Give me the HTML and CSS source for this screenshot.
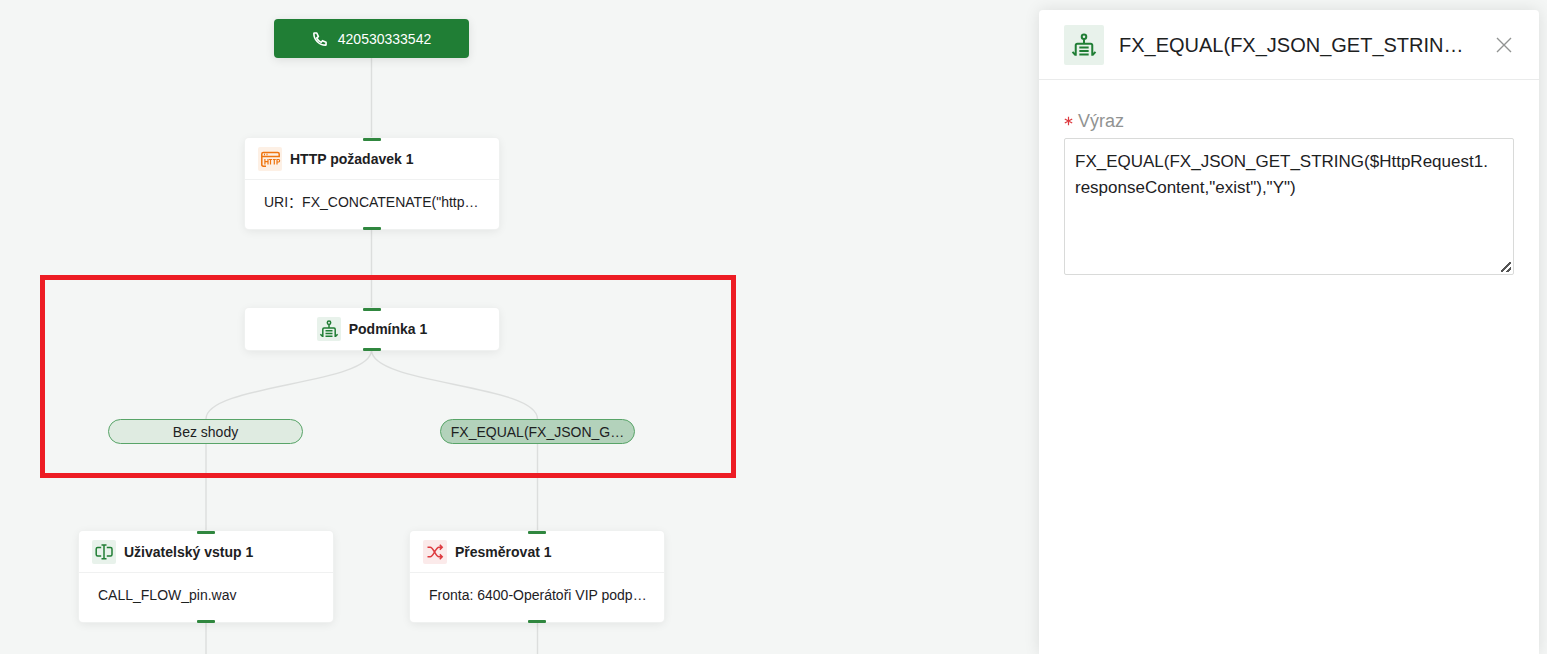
FILE: index.html
```
<!DOCTYPE html>
<html lang="cs">
<head>
<meta charset="utf-8">
<title>Call flow</title>
<link rel="stylesheet" href="styles.css">
</head>
<body>
<svg class="sprite" aria-hidden="true">
  <symbol id="condition" viewBox="0 0 24 24" fill="none" stroke="currentColor">
    <g stroke-width="1.5"><circle cx="12" cy="5.8" r="1.7"/><path d="M12 7.5V11M5.8 20V12.2Q5.8 11 7 11H17Q18.2 11 18.2 12.2V20M3.4 17.2L5.6 19.6M20.6 17.2L18.4 19.6"/><path d="M8.5 13.8H15.5M8.5 16.5H15.5M8.5 19.2H15.5"/></g>
  </symbol>
</svg>
<div class="app">
  <main class="canvas">
    <svg class="edges" fill="none" stroke="#dcdedd" stroke-width="1.4" aria-hidden="true">
      <path d="M371.5 58V138M371.5 229V308M371.5 350C371.5 385 206 384 206 419M371.5 350C371.5 385 537.5 384 537.5 419M206 443V531M537.5 443V531M206 622V2000M537.5 622V2000"/>
    </svg>
    <button class="phone" type="button">
      <svg width="16" height="16" viewBox="0 0 18 18" fill="none" stroke="currentColor" stroke-width="1.8" stroke-linejoin="round" aria-hidden="true"><path d="M2.6 2.2H5.4L7.2 6.3L5.3 7.7C6.3 9.9 7.9 11.7 10.3 12.8L11.8 10.9L15.8 12.6V15.4C15.8 15.7 15.5 15.9 15.2 15.9C8 15.9 2.1 10 2.1 2.8C2.1 2.5 2.3 2.2 2.6 2.2Z"/></svg>
      <span>420530333542</span>
    </button>
    <section class="node node-http">
      <header class="node-head">
        <span class="tile orange"><svg width="24" height="24" viewBox="0 0 24 24" fill="none" stroke="currentColor" stroke-width="1.5" aria-hidden="true"><path d="M8 19.2H5.3Q3.8 19.2 3.8 17.7V7Q3.8 5.5 5.3 5.5H19.7Q21.2 5.5 21.2 7V10.2M3.8 9.6H21.2M6 7.5H7M8.5 7.5H9.5"/><path stroke-width="1.2" d="M6.9 12V17.5M10 12V17.5M6.9 14.7H10M11 12.5H14M12.5 12.5V17.5M14.8 12.5H17.8M16.3 12.5V17.5M19 17.5V12.5H20.8Q21.6 12.5 21.6 13.7T20.8 15H19"/></svg></span>
        <h2>HTTP požadavek 1</h2>
      </header>
      <p class="node-body">URI：FX_CONCATENATE("http…</p>
    </section>
    <section class="node node-condition">
      <header class="node-head centered">
        <span class="tile green"><svg width="24" height="24" aria-hidden="true"><use href="#condition"/></svg></span>
        <h2>Podmínka 1</h2>
      </header>
    </section>
    <button class="branch branch-none" type="button">Bez shody</button>
    <button class="branch branch-match" type="button">FX_EQUAL(FX_JSON_G…</button>
    <section class="node node-input">
      <header class="node-head">
        <span class="tile green"><svg width="24" height="24" viewBox="0 0 24 24" fill="none" stroke="currentColor" stroke-width="1.5" aria-hidden="true"><path d="M9.2 7.6H5.7Q4.2 7.6 4.2 9.1V14.4Q4.2 15.9 5.7 15.9H9.2M14.8 7.6H18.5Q20 7.6 20 9.1V14.4Q20 15.9 18.5 15.9H14.8M12 5V18.8M9.5 5H14.5M9.5 18.8H14.5"/></svg></span>
        <h2>Uživatelský vstup 1</h2>
      </header>
      <p class="node-body">CALL_FLOW_pin.wav</p>
    </section>
    <section class="node node-redirect">
      <header class="node-head">
        <span class="tile red"><svg width="24" height="24" viewBox="0 0 24 24" fill="none" stroke="currentColor" stroke-width="1.5" aria-hidden="true"><path d="M4.5 7.2H7.2C10.5 7.2 12.5 16.8 16 16.8H19M4.5 16.8H7.2C10.5 16.8 12.5 7.2 16 7.2H19M16.8 4.8L19.2 7.2L16.8 9.6M16.8 14.4L19.2 16.8L16.8 19.2"/></svg></span>
        <h2>Přesměrovat 1</h2>
      </header>
      <p class="node-body">Fronta: 6400-Operátoři VIP podp…</p>
    </section>
    <div class="highlight"></div>
  </main>
  <aside class="panel">
    <header class="panel-head">
      <span class="tile large green"><svg width="32" height="32" aria-hidden="true"><use href="#condition"/></svg></span>
      <h1>FX_EQUAL(FX_JSON_GET_STRIN…</h1>
      <button class="close" type="button" aria-label="Zavřít"><svg width="16" height="16" viewBox="0 0 16 16" stroke="currentColor" stroke-width="1.4" aria-hidden="true"><path d="M1 1L15 15M15 1L1 15"/></svg></button>
    </header>
    <form class="panel-body">
      <label for="expression"><svg width="9" height="18" viewBox="0 0 9 18" stroke="#dd3a3f" stroke-width="1.2" aria-hidden="true"><path d="M4.5 4.8V13.2M.8 6.9L8.2 11.1M8.2 6.9L.8 11.1"/></svg>Výraz</label>
      <textarea id="expression" spellcheck="false" required>FX_EQUAL(FX_JSON_GET_STRING($HttpRequest1.responseContent,"exist"),"Y")</textarea>
    </form>
  </aside>
</div>
</body>
</html>
```
FILE: styles.css
```
* { box-sizing: border-box; }
body {
  margin: 0;
  background: #f4f6f5;
  color: #1d211f;
  font-family: "Liberation Sans", "Noto Sans CJK SC", sans-serif;
  font-size: 14px;
}
h1, h2, p { margin: 0; }
button { font: inherit; color: inherit; cursor: pointer; }
.sprite { display: none; }
.app { display: flex; height: 100vh; overflow: hidden; }
.canvas { position: relative; flex: 1; min-width: 0; }
.edges { position: absolute; inset: 0; width: 100%; height: 100%; }

.phone {
  position: absolute;
  left: 274px;
  top: 19px;
  width: 195px;
  height: 39px;
  display: flex;
  align-items: center;
  justify-content: center;
  gap: 10px;
  border: 0;
  border-radius: 4px;
  background: #207e35;
  color: #fff;
  box-shadow: 0 2px 10px rgba(0, 0, 0, .1);
}

.node {
  position: absolute;
  width: 254px;
  border-radius: 4px;
  background: #fff;
  box-shadow: 0 0 0 1px #eff1f0, 0 2px 10px rgba(0, 0, 0, .08);
}
.node::before, .node::after {
  content: "";
  position: absolute;
  left: calc(50% - 9px);
  width: 18px;
  height: 3px;
  border-radius: 1px;
  background: #30873f;
}
.node::before { top: 0; }
.node::after { bottom: -1px; }
.node-http { left: 245px; top: 138px; }
.node-condition { left: 245px; top: 308px; }
.node-input { left: 79px; top: 531px; }
.node-redirect { left: 410px; top: 531px; }
.node-head { display: flex; align-items: center; gap: 8px; height: 41px; padding: 0 13px; }
.node-head h2 { font-size: 14px; line-height: 20px; }
.node-head.centered { justify-content: center; height: 42px; }
.node-body {
  height: 50px;
  padding: 0 19px;
  border-top: 1px solid #f0f1f1;
  line-height: 44px;
  white-space: nowrap;
  overflow: hidden;
}
.tile { display: flex; align-items: center; justify-content: center; flex: none; width: 24px; height: 24px; border-radius: 2px; }
.green { color: #207e35; background: #e8f2eb; }
.orange { color: #ee740f; background: #fdf0e5; }
.red { color: #dd3a3f; background: #fbeaea; }

.branch {
  position: absolute;
  top: 419px;
  width: 195px;
  height: 25px;
  padding: 0;
  border: 1px solid #58a468;
  border-radius: 13px;
}
.branch-none { left: 108px; background: #dfebe1; }
.branch-match { left: 440px; background: #b3d2bb; }
.highlight {
  position: absolute;
  left: 40px;
  top: 275px;
  width: 696px;
  height: 203px;
  border: 5px solid #ed1c24;
  pointer-events: none;
}

.panel {
  width: 500px;
  margin: 10px 8px 0 0;
  border-radius: 4px 4px 0 0;
  background: #fff;
  box-shadow: 0 0 16px rgba(0, 0, 0, .1);
}
.panel-head { display: flex; align-items: center; height: 70px; padding: 0 25px; border-bottom: 1px solid #eaebeb; }
.large { width: 40px; height: 40px; }
.panel-head h1 { flex: 1; margin-left: 15px; font-size: 20px; font-weight: 400; line-height: 28px; white-space: nowrap; }
.close { display: flex; padding: 2px; border: 0; background: none; color: #919392; }
.panel-body { padding: 28px 25px; }
.panel-body label { display: flex; align-items: center; gap: 5px; height: 26px; color: #919392; font-size: 18px; }
.panel-body textarea {
  display: block;
  width: 100%;
  height: 137px;
  margin-top: 4px;
  padding: 10px 22px 10px 10px;
  border: 1px solid #d9dad9;
  border-radius: 2px;
  outline: 0;
  color: inherit;
  font: 17px/26px "Liberation Sans", sans-serif;
}
.panel-body textarea::-webkit-resizer {
  background: linear-gradient(135deg, transparent 44%, #555 45%, #555 57%, transparent 58%, transparent 74%, #555 75%, #555 87%, transparent 88%) 3px 3px / 10px 10px no-repeat;
}
```
